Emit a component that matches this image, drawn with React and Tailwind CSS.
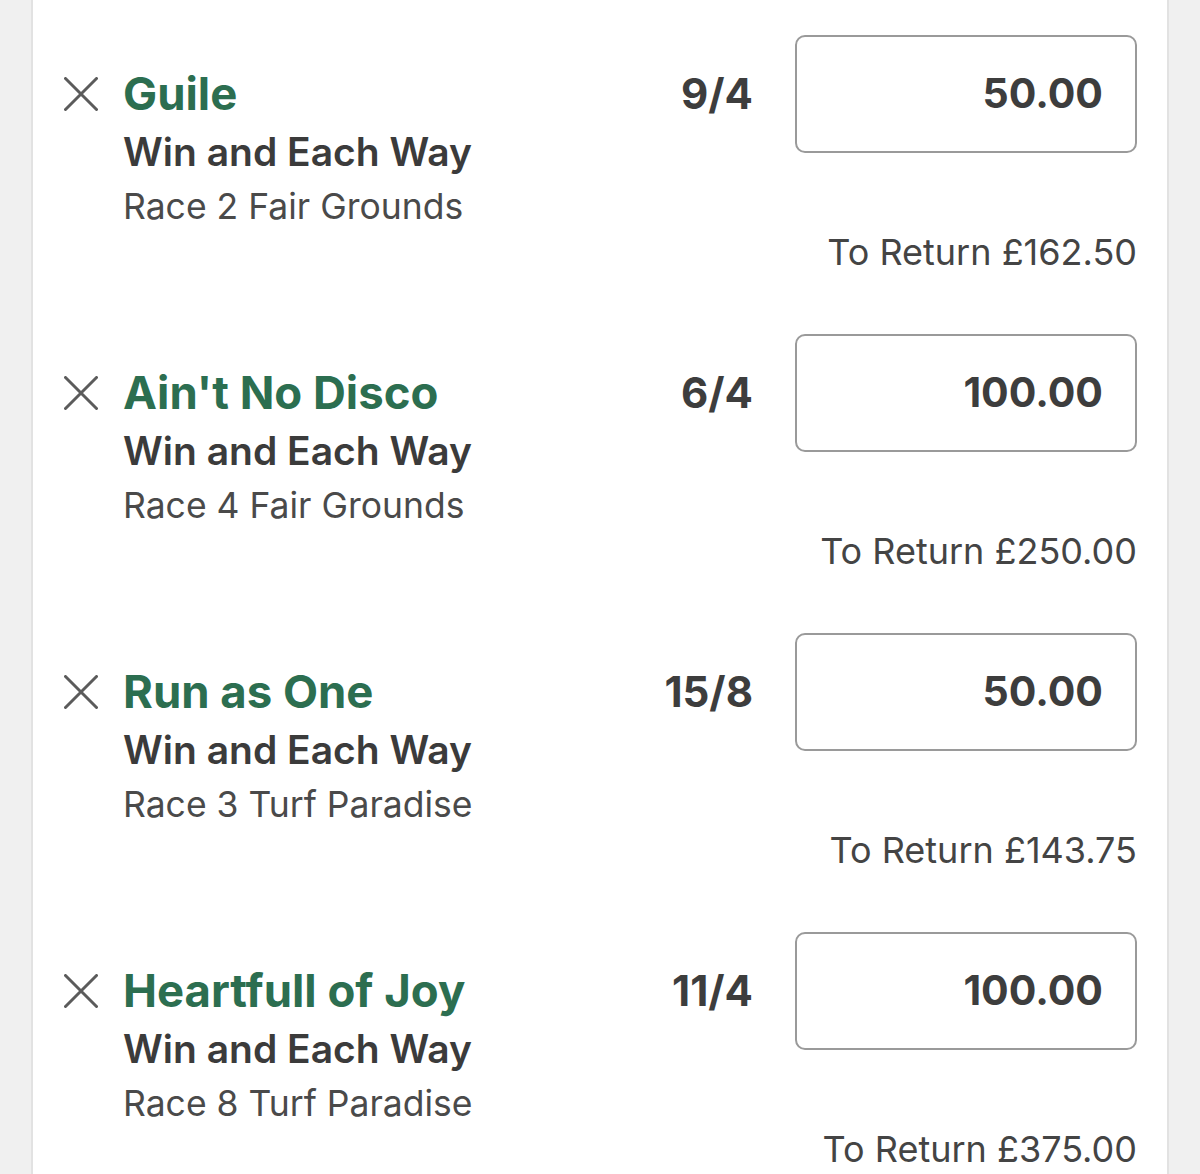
import React from "react";

const bets = [
  { name: "Guile", race: "Race 2 Fair Grounds", odds: "9/4", stake: "50.00", ret: "£162.50" },
  { name: "Ain't No Disco", race: "Race 4 Fair Grounds", odds: "6/4", stake: "100.00", ret: "£250.00" },
  { name: "Run as One", race: "Race 3 Turf Paradise", odds: "15/8", stake: "50.00", ret: "£143.75" },
  { name: "Heartfull of Joy", race: "Race 8 Turf Paradise", odds: "11/4", stake: "100.00", ret: "£375.00" },
];

function CloseIcon() {
  return (
    <svg width="34" height="34" viewBox="0 0 34 34" className="shrink-0">
      <path d="M1.5 1.5 L32.5 32.5 M32.5 1.5 L1.5 32.5" stroke="#5b5b5b" strokeWidth="3" strokeLinecap="round" fill="none" />
    </svg>
  );
}

function BetRow({ bet }) {
  return (
    <div className="flex items-start">
      <div className="flex items-start mt-[30px]">
        <div className="h-[58px] flex items-center">
          <CloseIcon />
        </div>
        <div className="ml-[25px] flex flex-col">
          <div className="text-[45.5px] leading-[58px] font-bold text-[#2c6e50]">{bet.name}</div>
          <div className="text-[39px] leading-[58px] font-semibold text-[#3b3b3b]">Win and Each Way</div>
          <div className="text-[35.5px] leading-[52px] text-[#4a4a4a]">{bet.race}</div>
        </div>
      </div>
      <div className="flex-1" />
      <div className="mt-[30px] text-[42px] leading-[58px] font-bold text-[#3d3d3d] mr-[42px]">{bet.odds}</div>
      <div className="flex flex-col items-end">
        <div className="w-[342px] h-[118px] border-2 border-[#9a9a9a] rounded-[10px] flex items-center justify-end pr-[32px]">
          <span className="text-[41px] font-bold text-[#3d3d3d]">{bet.stake}</span>
        </div>
        <div className="mt-[77px] text-[36px] leading-[44px] text-[#444444] whitespace-nowrap">
          To Return {bet.ret}
        </div>
      </div>
    </div>
  );
}

export default function App() {
  return (
    <div className="min-h-[1174px] w-[1200px] bg-[#f0f0f0] flex" style={{ fontFamily: "Inter, 'Noto Sans', sans-serif" }}>
      <div className="ml-[31px] w-[1138px] bg-white border-x-2 border-[#e2e2e2] pl-[31px] pr-[30px] pt-[35px] flex flex-col gap-[60px]">
        {bets.map((b) => (
          <BetRow key={b.name} bet={b} />
        ))}
      </div>
    </div>
  );
}
